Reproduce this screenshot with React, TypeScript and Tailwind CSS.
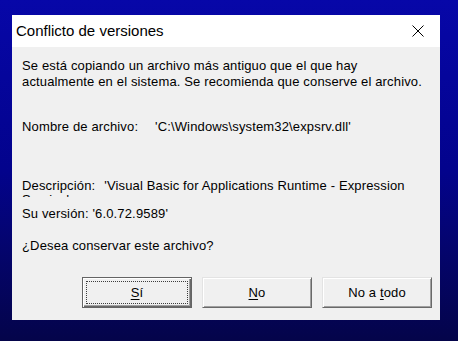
import React from 'react';

const font = { fontFamily: '"Liberation Sans", Arial, sans-serif' };

export default function App() {
  return (
    <div
      className="w-[458px] h-[341px] overflow-hidden bg-linear-to-b from-[#0707a8] via-[#03038c] to-[#04044a] pt-[15px] pl-[12px]"
      style={font}
    >
      <div className="w-[428px] h-[305px] bg-[#f0f0f0] flex flex-col text-black">
        {/* Title bar */}
        <div className="h-[32px] bg-white flex items-center justify-between pl-[4px] pr-[16px]">
          <span className="text-[15px]">Conflicto de versiones</span>
          <svg width="12" height="12" viewBox="0 0 12 12" className="shrink-0">
            <path d="M0.5 0.5L11.5 11.5M11.5 0.5L0.5 11.5" stroke="#000" strokeWidth="1" />
          </svg>
        </div>

        {/* Body */}
        <div className="flex flex-col pl-[10px] text-[13px] tracking-[0.15px]">
          <p className="mt-[11px] leading-[16px]">
            Se está copiando un archivo más antiguo que el que hay
            <br />
            actualmente en el sistema. Se recomienda que conserve el archivo.
          </p>

          <div className="mt-[29px] leading-[16px] flex">
            <span className="w-[133px] shrink-0">Nombre de archivo:</span>
            <span>'C:\Windows\system32\expsrv.dll'</span>
          </div>

          {/* description box: second line is clipped like the original */}
          <div className="mt-[44px] h-[18px] overflow-hidden leading-[14px]">
            <div className="flex">
              <span>Descripción:</span>
              <span className="ml-[9px]">'Visual Basic for Applications Runtime - Expression</span>
            </div>
            <div>Service'</div>
          </div>

          <div className="mt-[9px] leading-[16px]">Su versión: '6.0.72.9589'</div>

          <div className="mt-[16px] leading-[16px]">¿Desea conservar este archivo?</div>
        </div>

        {/* Buttons */}
        <div className="mt-[23px] flex justify-end gap-[10px] pr-[8px] text-[13px] tracking-[0.15px]">
          <button className="w-[110px] h-[31px] bg-[#f0f0f0] border border-[#646464] shadow-[inset_1px_1px_0_#fff,inset_-1px_-1px_0_#696969,inset_-2px_-2px_0_#a0a0a0] flex p-[3px]">
            <span className="flex-1 flex items-center justify-center border border-dotted border-[#3c3c3c]">
              <span className="underline underline-offset-[2px]">S</span>í
            </span>
          </button>
          <button className="w-[110px] h-[31px] bg-[#f0f0f0] border border-t-[#e3e3e3] border-l-[#e3e3e3] border-r-[#696969] border-b-[#696969] shadow-[inset_1px_1px_0_#fff,inset_-1px_-1px_0_#a0a0a0] flex items-center justify-center">
            <span>
              <span className="underline underline-offset-[2px]">N</span>o
            </span>
          </button>
          <button className="w-[110px] h-[31px] bg-[#f0f0f0] border border-t-[#e3e3e3] border-l-[#e3e3e3] border-r-[#696969] border-b-[#696969] shadow-[inset_1px_1px_0_#fff,inset_-1px_-1px_0_#a0a0a0] flex items-center justify-center">
            <span>
              No a <span className="underline underline-offset-[2px]">t</span>odo
            </span>
          </button>
        </div>
      </div>
    </div>
  );
}
